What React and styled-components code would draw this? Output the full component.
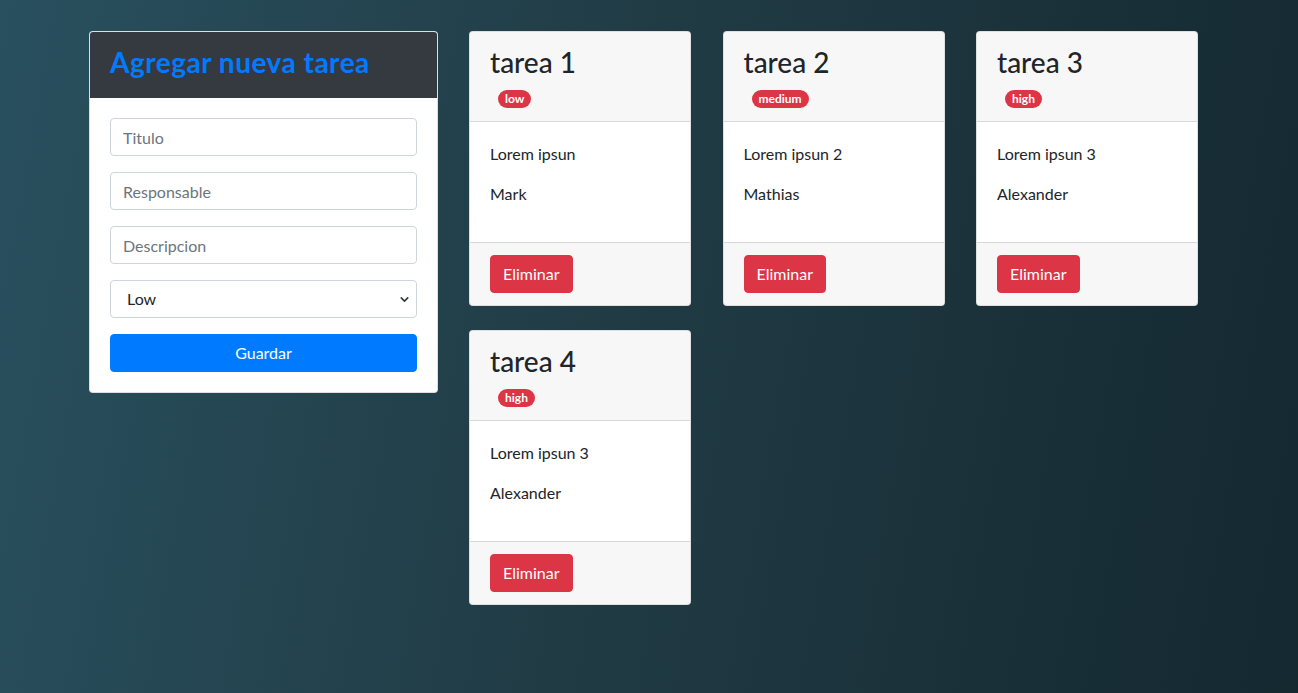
import React from 'react';
import styled, { createGlobalStyle } from 'styled-components';
import { ChevronDown } from 'lucide-react';

const GlobalStyle = createGlobalStyle`
  * {
    box-sizing: border-box;
  }

  body {
    margin: 0;
    min-height: 100vh;
    font-family: Lato, 'Noto Sans', sans-serif;
    font-size: 16px;
    line-height: 1.5;
    color: #212529;
    background: linear-gradient(100deg, #29505f, #203a43 50%, #142830);
  }
`;

const Page = styled.div`
  display: flex;
  align-items: flex-start;
  gap: 31px;
  padding: 31px 0 0 89px;
  min-height: 100vh;
`;

const Card = styled.div`
  display: flex;
  flex-direction: column;
  width: ${(p) => p.width || 'auto'};
  background: #fff;
  border: 1px solid rgba(0, 0, 0, 0.125);
  border-radius: 4px;
  overflow: hidden;
`;

const CardHeader = styled.div`
  padding: 12px 20px;
  background: ${(p) => (p.dark ? '#343a40' : 'rgba(0, 0, 0, 0.03)')};
  border-bottom: 1px solid ${(p) => (p.dark ? '#343a40' : 'rgba(0, 0, 0, 0.125)')};
`;

const Title = styled.h3`
  margin: 0 0 8px;
  height: 33px;
  font-size: 28px;
  font-weight: ${(p) => (p.primary ? 700 : 500)};
  letter-spacing: ${(p) => (p.primary ? '0.5px' : '0')};
  line-height: 36px;
  color: ${(p) => (p.primary ? '#007bff' : '#212529')};
`;

const BadgeRow = styled.div`
  display: flex;
  align-items: center;
  height: 24px;
  padding-top: 3px;
`;

const Badge = styled.span`
  display: inline-block;
  margin-left: 8px;
  padding: 3px 7px;
  font-size: 12px;
  font-weight: 700;
  line-height: 1;
  color: #fff;
  background: #dc3545;
  border-radius: 10rem;
`;

const CardBody = styled.div`
  flex: 1;
  padding: 20px;
`;

const CardFooter = styled.div`
  padding: 12px 20px;
  background: rgba(0, 0, 0, 0.03);
  border-top: 1px solid rgba(0, 0, 0, 0.125);
`;

const Text = styled.p`
  margin: 0 0 16px;
  height: 24px;
`;

const FormGroup = styled.div`
  position: relative;
  margin-bottom: 16px;
`;

const Input = styled.input`
  display: block;
  width: 100%;
  height: 38px;
  padding: 6px 12px;
  font-family: inherit;
  font-size: 16px;
  line-height: 1.5;
  color: #495057;
  background: #fff;
  border: 1px solid #ced4da;
  border-radius: 4px;

  &::placeholder {
    color: #6c757d;
  }
`;

const Select = styled.select`
  display: block;
  width: 100%;
  height: 38px;
  padding: 6px 30px 6px 16px;
  font-family: inherit;
  font-size: 16px;
  line-height: 1.5;
  color: #212529;
  background: #fff;
  border: 1px solid #ced4da;
  border-radius: 4px;
  appearance: none;
`;

const SelectArrow = styled(ChevronDown)`
  position: absolute;
  right: 6px;
  top: 13px;
  color: #343a40;
  pointer-events: none;
`;

const Button = styled.button`
  display: ${(p) => (p.block ? 'block' : 'inline-block')};
  width: ${(p) => (p.block ? '100%' : 'auto')};
  height: 38px;
  padding: 6px 12px;
  font-family: inherit;
  font-size: 16px;
  line-height: 1.5;
  color: #fff;
  background: ${(p) => (p.variant === 'danger' ? '#dc3545' : '#007bff')};
  border: 1px solid ${(p) => (p.variant === 'danger' ? '#dc3545' : '#007bff')};
  border-radius: 4px;
  cursor: pointer;
`;

const TaskGrid = styled.div`
  display: grid;
  grid-template-columns: repeat(3, 222px);
  column-gap: 31.5px;
  row-gap: 24px;
  align-items: start;
`;

const tasks = [
  { id: 1, title: 'tarea 1', priority: 'low', description: 'Lorem ipsun', responsible: 'Mark' },
  { id: 2, title: 'tarea 2', priority: 'medium', description: 'Lorem ipsun 2', responsible: 'Mathias' },
  { id: 3, title: 'tarea 3', priority: 'high', description: 'Lorem ipsun 3', responsible: 'Alexander' },
  { id: 4, title: 'tarea 4', priority: 'high', description: 'Lorem ipsun 3', responsible: 'Alexander' },
];

const TaskForm = () => (
  <Card width="349px">
    <CardHeader dark>
      <Title primary>Agregar nueva tarea</Title>
    </CardHeader>
    <CardBody>
      <form onSubmit={(e) => e.preventDefault()}>
        <FormGroup>
          <Input type="text" placeholder="Titulo" />
        </FormGroup>
        <FormGroup>
          <Input type="text" placeholder="Responsable" />
        </FormGroup>
        <FormGroup>
          <Input type="text" placeholder="Descripcion" />
        </FormGroup>
        <FormGroup>
          <Select defaultValue="low">
            <option value="low">Low</option>
            <option value="medium">Medium</option>
            <option value="high">High</option>
          </Select>
          <SelectArrow size={13} strokeWidth={3} />
        </FormGroup>
        <Button type="submit" block>
          Guardar
        </Button>
      </form>
    </CardBody>
  </Card>
);

const TaskCard = ({ task }) => (
  <Card>
    <CardHeader>
      <Title>{task.title}</Title>
      <BadgeRow>
        <Badge>{task.priority}</Badge>
      </BadgeRow>
    </CardHeader>
    <CardBody>
      <Text>{task.description}</Text>
      <Text>{task.responsible}</Text>
    </CardBody>
    <CardFooter>
      <Button variant="danger">Eliminar</Button>
    </CardFooter>
  </Card>
);

const App = () => (
  <>
    <GlobalStyle />
    <Page>
      <TaskForm />
      <TaskGrid>
        {tasks.map((task) => (
          <TaskCard key={task.id} task={task} />
        ))}
      </TaskGrid>
    </Page>
  </>
);

export default App;
